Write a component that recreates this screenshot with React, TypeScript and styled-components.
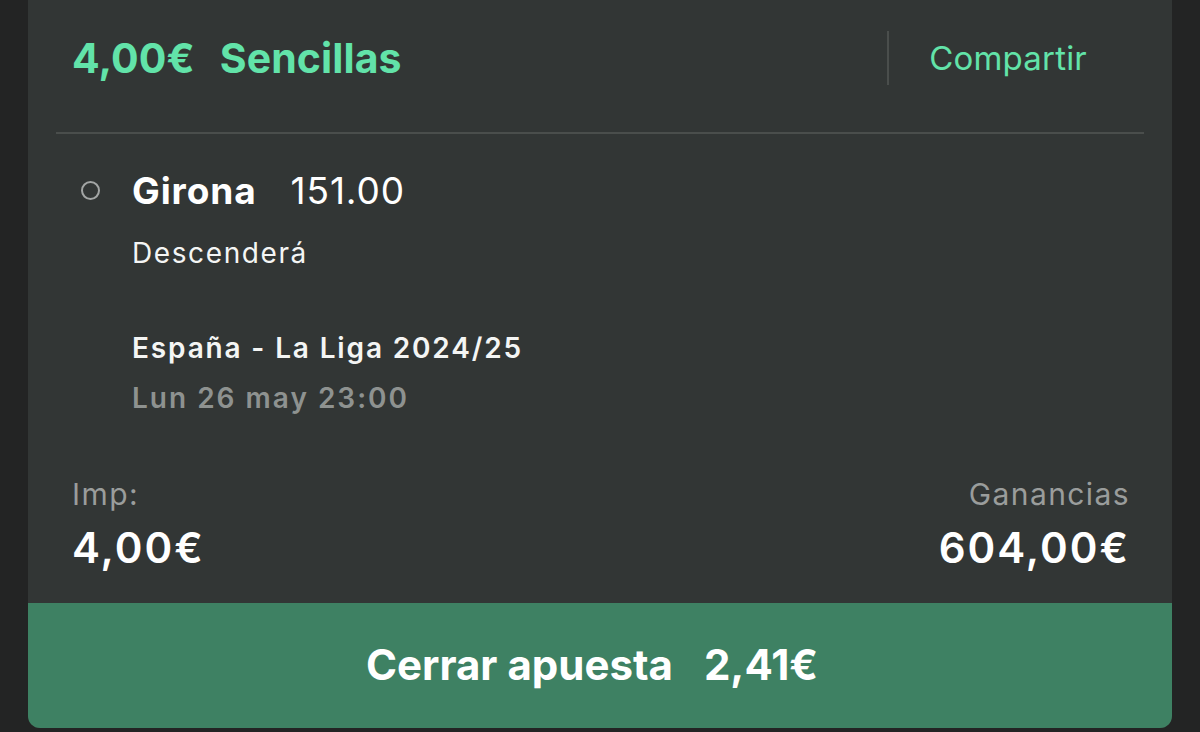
import React from 'react';
import styled, { createGlobalStyle } from 'styled-components';

const GlobalStyle = createGlobalStyle`
  html, body {
    margin: 0;
    padding: 0;
    background: #232424;
  }
  body {
    font-family: Inter, "Noto Sans", "Liberation Sans", sans-serif;
    -webkit-font-smoothing: antialiased;
  }
`;

const Page = styled.div`
  width: 1200px;
  height: 732px;
  padding: 0 28px 4px;
  box-sizing: border-box;
  overflow: hidden;
`;

const Card = styled.div`
  height: 728px;
  background: #323635;
  border-radius: 0 0 12px 12px;
  overflow: hidden;
  display: flex;
  flex-direction: column;
`;

const Inner = styled.div`
  flex: 1;
  padding: 0 28px;
  display: flex;
  flex-direction: column;
`;

const Header = styled.div`
  height: 134px;
  padding: 0 57px 16px 16px;
  box-sizing: border-box;
  border-bottom: 2px solid #4a4e4c;
  display: flex;
  align-items: center;
`;

const Title = styled.h1`
  flex: 1;
  margin: 0;
  display: flex;
  gap: 25px;
  font-size: 41px;
  font-weight: 700;
  color: #62e3a9;
  letter-spacing: 0.1px;
`;

const VDivider = styled.div`
  width: 2px;
  height: 54px;
  background: #4a4e4c;
  margin-right: 40px;
`;

const ShareLink = styled.a`
  font-size: 33px;
  font-weight: 400;
  color: #62e3a9;
  letter-spacing: 0.2px;
  cursor: pointer;
`;

const Selection = styled.div`
  padding: 34px 0 0 25px;
`;

const TitleRow = styled.div`
  display: flex;
  align-items: center;
  gap: 32px;
  height: 44px;
`;

const Radio = styled.span`
  width: 15px;
  height: 15px;
  border: 2px solid #a3a6a5;
  border-radius: 50%;
  flex-shrink: 0;
`;

const Pick = styled.div`
  display: flex;
  align-items: baseline;
  gap: 34px;
  color: #ffffff;
  font-size: 37px;
  letter-spacing: 0.9px;
`;

const Team = styled.span`
  font-weight: 700;
`;

const Odds = styled.span`
  font-weight: 400;
`;

const Details = styled.div`
  margin-left: 51px;
  display: flex;
  flex-direction: column;
`;

const Line = styled.div<{ $gap: number; $tone?: 'muted'; $weight?: number; $track: number }>`
  margin-top: ${(p) => p.$gap}px;
  font-size: 28px;
  line-height: 36px;
  font-weight: ${(p) => p.$weight ?? 400};
  color: ${(p) => (p.$tone === 'muted' ? '#8e9290' : '#f4f5f4')};
  letter-spacing: ${(p) => p.$track}px;
`;

const Stakes = styled.div`
  margin-top: auto;
  padding: 0 14px 30px 16px;
  display: flex;
  justify-content: space-between;
`;

const StakeCol = styled.div<{ $align: 'left' | 'right' }>`
  display: flex;
  flex-direction: column;
  align-items: ${(p) => (p.$align === 'left' ? 'flex-start' : 'flex-end')};
`;

const StakeLabel = styled.span`
  font-size: 30px;
  line-height: 36px;
  color: #9a9d9c;
  letter-spacing: 1.4px;
`;

const StakeValue = styled.span`
  margin-top: 11px;
  font-size: 42px;
  line-height: 50px;
  font-weight: 600;
  color: #ffffff;
  letter-spacing: 2px;
`;

const CashOut = styled.button`
  height: 125px;
  width: 100%;
  border: none;
  background: #3e8163;
  color: #ffffff;
  font-family: inherit;
  font-size: 42px;
  font-weight: 700;
  letter-spacing: 0;
  display: flex;
  align-items: center;
  justify-content: center;
  gap: 31px;
  padding: 0 16px 2px 0;
  cursor: pointer;
`;

export default function App() {
  return (
    <>
      <GlobalStyle />
      <Page>
        <Card>
          <Inner>
            <Header>
              <Title>
                <span>4,00€</span>
                <span>Sencillas</span>
              </Title>
              <VDivider />
              <ShareLink>Compartir</ShareLink>
            </Header>
            <Selection>
              <TitleRow>
                <Radio />
                <Pick>
                  <Team>Girona</Team>
                  <Odds>151.00</Odds>
                </Pick>
              </TitleRow>
              <Details>
                <Line $gap={23} $track={1.6}>Descenderá</Line>
                <Line $gap={59} $weight={600} $track={1.85}>España - La Liga 2024/25</Line>
                <Line $gap={14} $weight={600} $track={2} $tone="muted">Lun 26 may 23:00</Line>
              </Details>
            </Selection>
            <Stakes>
              <StakeCol $align="left">
                <StakeLabel>Imp:</StakeLabel>
                <StakeValue>4,00€</StakeValue>
              </StakeCol>
              <StakeCol $align="right">
                <StakeLabel>Ganancias</StakeLabel>
                <StakeValue>604,00€</StakeValue>
              </StakeCol>
            </Stakes>
          </Inner>
          <CashOut>
            <span>Cerrar apuesta</span>
            <span>2,41€</span>
          </CashOut>
        </Card>
      </Page>
    </>
  );
}
